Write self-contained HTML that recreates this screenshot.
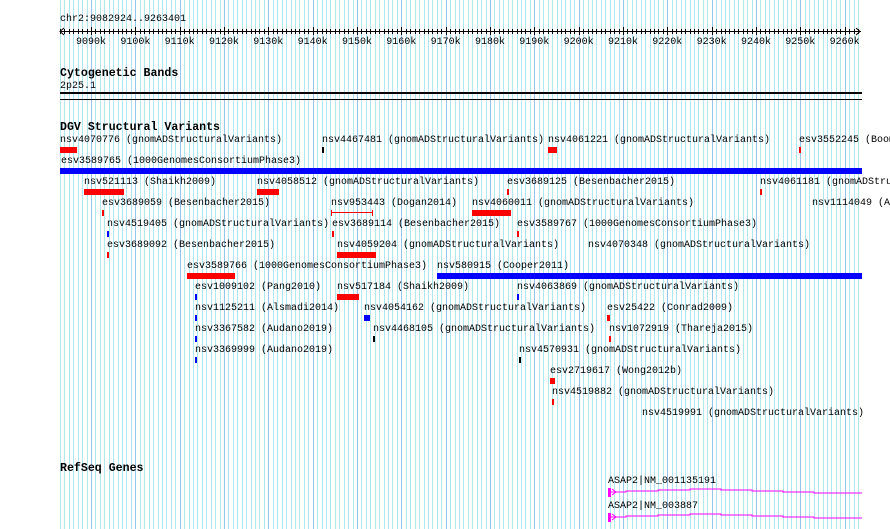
<!DOCTYPE html>
<html><head><meta charset="utf-8"><style>
html,body{margin:0;width:890px;height:529px;overflow:hidden}
body{background:#fff;position:relative;font-family:"Liberation Mono","DejaVu Sans Mono",monospace;font-size:10px;color:#000}
.t{position:absolute;white-space:pre;line-height:11px;font-size:10px}
.h{position:absolute;white-space:pre;font-weight:bold;font-size:11.6px;line-height:12px}
.b{position:absolute;height:6px}
svg{position:absolute;left:0;top:0}
#f{position:absolute;left:0;top:0;width:890px;height:529px;overflow:hidden}
</style></head><body>
<svg id="g" width="890" height="529"></svg>
<div class="t" style="left:60px;top:14px">chr2:9082924..9263401</div>
<div class="h" style="left:60px;top:68px">Cytogenetic Bands</div>
<div class="t" style="left:60px;top:81px">2p25.1</div>
<div style="position:absolute;left:60px;top:92px;width:802px;height:2px;background:#000"></div>
<div style="position:absolute;left:60px;top:99px;width:802px;height:1px;background:#000"></div>
<div class="h" style="left:60px;top:122px">DGV Structural Variants</div>
<div class="h" style="left:60px;top:463px">RefSeq Genes</div>
<div class="t" style="left:608px;top:476px">ASAP2|NM_001135191</div>
<div class="t" style="left:608px;top:501px">ASAP2|NM_003887</div>
<div id="f"></div>
<script>
var s='';
for(var i=0;i<=181;i++){var x=60+i*4.4333;if(x>862)break;var maj=((i-7)%10===0);var xx=Math.round(x)+0.5;
s+='<line x1="'+xx+'" y1="0" x2="'+xx+'" y2="529" stroke="'+(maj?'#94c6ec':'#ade8ef')+'" stroke-width="1"/>';
s+='<line x1="'+xx+'" y1="'+(maj?27:29)+'" x2="'+xx+'" y2="'+(maj?35:34)+'" stroke="#000"/>';}
s+='<line x1="60" y1="31.5" x2="861" y2="31.5" stroke="#000"/>';
s+='<polyline points="64,28 60,31.5 64,35" fill="none" stroke="#000"/><polyline points="856,28 860,31.5 856,35" fill="none" stroke="#000"/>';
for(var k=0;k<18;k++){var cx=91+k*44.33;s+='<text x="'+cx+'" y="44" text-anchor="middle" font-family="Liberation Mono" font-size="10">'+(9090+k*10)+'k</text>';}
function gene(y){return '<rect x="608" y="'+(y-4)+'" width="3" height="9" fill="#f0f"/><polyline points="612,'+(y-3)+' 616,'+y+' 612,'+(y+3)+'" fill="none" stroke="#f0f"/><polyline points="611,'+y+' 626,'+y+' 626,'+(y-1)+' 658,'+(y-1)+' 658,'+(y-2)+' 690,'+(y-2)+' 690,'+(y-3)+' 721,'+(y-3)+' 721,'+(y-2)+' 752,'+(y-2)+' 752,'+(y-1)+' 783,'+(y-1)+' 783,'+y+' 814,'+y+' 814,'+(y+1)+' 862,'+(y+1)+'" fill="none" stroke="#f0f"/>';}
s+=gene(492)+gene(517);
document.getElementById('g').innerHTML=s;
var R='#f00',B='#00f',K='#000';
var items=[
[0,60,'nsv4070776 (gnomADStructuralVariants)',60,17,R],[0,322,'nsv4467481 (gnomADStructuralVariants)',322,2,K],[0,548,'nsv4061221 (gnomADStructuralVariants)',548,9,R],[0,799,'esv3552245 (Boom',799,2,R],
[1,61,'esv3589765 (1000GenomesConsortiumPhase3)',60,802,B],
[2,84,'nsv521113 (Shaikh2009)',84,40,R],[2,257,'nsv4058512 (gnomADStructuralVariants)',257,22,R],[2,507,'esv3689125 (Besenbacher2015)',507,2,R],[2,760,'nsv4061181 (gnomADStru',760,2,R],
[3,102,'esv3689059 (Besenbacher2015)',102,2,R],[3,331,'nsv953443 (Dogan2014)',0,0,R],[3,472,'nsv4060011 (gnomADStructuralVariants)',472,39,R],[3,812,'nsv1114049 (A',0,0,R],
[4,107,'nsv4519405 (gnomADStructuralVariants)',107,2,B],[4,332,'esv3689114 (Besenbacher2015)',332,2,R],[4,517,'esv3589767 (1000GenomesConsortiumPhase3)',517,2,R],
[5,107,'esv3689092 (Besenbacher2015)',107,2,R],[5,337,'nsv4059204 (gnomADStructuralVariants)',337,39,R],[5,588,'nsv4070348 (gnomADStructuralVariants)',0,0,R],
[6,187,'esv3589766 (1000GenomesConsortiumPhase3)',187,48,R],[6,437,'nsv580915 (Cooper2011)',437,425,B],
[7,195,'esv1009102 (Pang2010)',195,2,B],[7,337,'nsv517184 (Shaikh2009)',337,22,R],[7,517,'nsv4063869 (gnomADStructuralVariants)',517,2,B],
[8,195,'nsv1125211 (Alsmadi2014)',195,2,B],[8,364,'nsv4054162 (gnomADStructuralVariants)',364,6,B],[8,607,'esv25422 (Conrad2009)',607,3,R],
[9,195,'nsv3367582 (Audano2019)',195,2,B],[9,373,'nsv4468105 (gnomADStructuralVariants)',373,2,K],[9,609,'nsv1072919 (Thareja2015)',609,2,R],
[10,195,'nsv3369999 (Audano2019)',195,2,B],[10,519,'nsv4570931 (gnomADStructuralVariants)',519,2,K],
[11,550,'esv2719617 (Wong2012b)',550,5,R],
[12,552,'nsv4519882 (gnomADStructuralVariants)',552,2,R],
[13,642,'nsv4519991 (gnomADStructuralVariants)',0,0,R]];
var h='';
items.forEach(function(a){var by=147+a[0]*21;
h+='<div class="t" style="left:'+a[1]+'px;top:'+(by-12)+'px">'+a[2]+'</div>';
if(a[4])h+='<div class="b" style="left:'+a[3]+'px;top:'+by+'px;width:'+a[4]+'px;background:'+a[5]+'"></div>';});
var y3=147+3*21;
h+='<div style="position:absolute;left:331px;top:'+(y3+2)+'px;width:42px;height:1px;background:#f00"></div><div style="position:absolute;left:331px;top:'+y3+'px;width:1px;height:6px;background:#f00"></div><div style="position:absolute;left:372px;top:'+y3+'px;width:1px;height:6px;background:#f00"></div>';
document.getElementById('f').innerHTML=h;
</script>
</body></html>
